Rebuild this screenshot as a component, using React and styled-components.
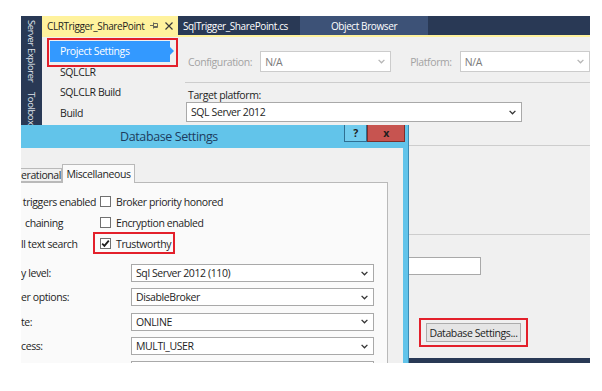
import React from "react";
import styled, { createGlobalStyle } from "styled-components";

const GlobalStyle = createGlobalStyle`
  body {
    margin: 0;
    background: #ffffff;
    font-family: "Open Sans", "Noto Sans", "Liberation Sans", sans-serif;
    font-size: 10.5px;
    letter-spacing: -0.4px;
    color: #1e1e1e;
  }
`;

const NAVY = "#293955";

// Página y ventana del IDE
const Page = styled.div`
  padding: 16px 0 0 21px;
  width: 602px;
  height: 391px;
  box-sizing: border-box;
`;

const IdeWindow = styled.div`
  position: relative;
  width: 569px;
  height: 347px;
  display: flex;
  overflow: hidden;
`;

const SideStrip = styled.div`
  width: 21px;
  background: ${NAVY};
  display: flex;
  flex-direction: column;
  align-items: center;
  gap: 10px;
  padding-top: 4px;
`;

const VerticalLabel = styled.span`
  writing-mode: vertical-rl;
  font-size: 9.5px;
  color: #dfe3ea;
  white-space: nowrap;
`;

const MainColumn = styled.div`
  flex: 1;
  display: flex;
  flex-direction: column;
`;

// Pestañas de documentos
const TabBar = styled.div`
  height: 19px;
  background: ${NAVY};
  display: flex;
`;

const DocTab = styled.div`
  width: ${(p) => p.$width}px;
  box-sizing: border-box;
  display: flex;
  align-items: center;
  justify-content: ${(p) => (p.$center ? "center" : "flex-start")};
  padding: 0 5px;
  font-size: 10px;
  white-space: nowrap;
  overflow: hidden;
  background: ${(p) => (p.$active ? "#fff29d" : p.$hover ? "#3d5277" : "transparent")};
  color: ${(p) => (p.$active ? "#1e1e1e" : "#ffffff")};
`;

const TabTitle = styled.span`
  flex: 1;
`;

const TabIcon = styled.span`
  display: flex;
  margin-left: ${(p) => p.$gap}px;
`;

const TabUnderline = styled.div`
  height: 2px;
  background: #fff29d;
`;

const Body = styled.div`
  flex: 1;
  display: flex;
  background: #f0f0f0;
`;

const BottomStrip = styled.div`
  height: 5px;
  background: ${NAVY};
`;

// Lista de la izquierda
const NavList = styled.div`
  width: 138px;
  padding-top: 4px;
  display: flex;
  flex-direction: column;
`;

const NavItem = styled.div`
  position: relative;
  height: 20.5px;
  line-height: 20.5px;
  padding-left: ${(p) => (p.$selected ? 10 : 18)}px;
  margin-left: ${(p) => (p.$selected ? 8 : 0)}px;
  width: ${(p) => (p.$selected ? "120px" : "auto")};
  box-sizing: border-box;
  background: ${(p) => (p.$selected ? "#3399ff" : "transparent")};
  color: ${(p) => (p.$selected ? "#ffffff" : "#1e1e1e")};

  ${(p) =>
    p.$selected &&
    `
    &::before {
      content: "";
      position: absolute;
      right: -4px;
      top: 6px;
      border-left: 4px solid #3399ff;
      border-top: 4px solid transparent;
      border-bottom: 4px solid transparent;
    }
    &::after {
      content: "";
      position: absolute;
      left: -3px;
      top: -3px;
      right: -8px;
      bottom: -5px;
      border: 2px solid #e3202b;
    }
  `}
`;

// Panel de configuración
const Pane = styled.div`
  flex: 1;
  display: flex;
  flex-direction: column;
  padding-top: 14px;
`;

const InlineRow = styled.div`
  display: flex;
  align-items: center;
  gap: 8px;
  padding-left: 8px;
`;

const FieldLabel = styled.span`
  color: ${(p) => (p.$muted ? "#a3a3a3" : "#1e1e1e")};
  margin-left: ${(p) => p.$offset || 0}px;
  white-space: nowrap;
`;

const Select = styled.div`
  width: ${(p) => p.$width}px;
  height: ${(p) => p.$height || 21}px;
  box-sizing: border-box;
  display: flex;
  align-items: center;
  justify-content: space-between;
  padding: 0 5px 0 4px;
  background: #ffffff;
  border: 1px solid ${(p) => (p.$disabled ? "#cccccc" : "#a9a9a9")};
  color: ${(p) => (p.$disabled ? "#7a7a7a" : "#1e1e1e")};
  margin-left: ${(p) => p.$offset || 0}px;
  white-space: nowrap;
`;

const Separator = styled.div`
  height: 1px;
  background: #cdcdcd;
  margin: ${(p) => p.$top}px 0 0 5px;
`;

const TargetLabel = styled.div`
  margin: 5px 0 0 8px;
  line-height: 14px;
`;

const TextBox = styled.div`
  width: 295px;
  height: 18px;
  margin: 22px 0 0 6px;
  box-sizing: border-box;
  background: #ffffff;
  border: 1px solid #a9a9a9;
`;

const ButtonWrap = styled.div`
  position: relative;
  align-self: flex-start;
  margin: 48px 0 0 246px;

  &::after {
    content: "";
    position: absolute;
    left: -7px;
    top: -5px;
    right: -7px;
    bottom: -5px;
    border: 2px solid #e3202b;
  }
`;

const Button = styled.div`
  width: 95px;
  height: 19px;
  box-sizing: border-box;
  display: flex;
  align-items: center;
  justify-content: center;
  background: #e5e5e5;
  border: 1px solid #acacac;
  white-space: nowrap;
`;

// Diálogo superpuesto
const DialogFrame = styled.div`
  position: absolute;
  left: 0;
  top: 109px;
  width: 388px;
  height: 260px;
  box-sizing: border-box;
  background: #62c4ea;
  border-right: 1px solid #3b8cb5;
  display: flex;
  flex-direction: column;
`;

const TitleBar = styled.div`
  height: 23px;
  display: flex;
  align-items: flex-start;
`;

const DialogTitle = styled.div`
  flex: 1;
  text-align: center;
  padding-right: 27px;
  line-height: 23px;
  font-size: 12.5px;
  color: #1d3c5e;
`;

const CaptionButton = styled.div`
  width: ${(p) => p.$width}px;
  height: 17px;
  box-sizing: border-box;
  display: flex;
  align-items: center;
  justify-content: center;
  background: ${(p) => (p.$close ? "#c75450" : "#72ccee")};
  border: 1px solid ${(p) => (p.$close ? "#7b2f2c" : "#2f6f92")};
  border-top: none;
  margin-right: ${(p) => (p.$close ? 3 : 0)}px;
  font-weight: bold;
  font-size: 10.5px;
  color: #1e1e1e;
`;

const DialogBody = styled.div`
  flex: 1;
  margin-right: 5px;
  background: #f0f0f0;
  padding: 16px 15px 0 0;
  display: flex;
  flex-direction: column;
`;

const TabStrip = styled.div`
  height: 18px;
  display: flex;
  align-items: flex-end;
`;

const DlgTab = styled.div`
  position: relative;
  z-index: 1;
  width: ${(p) => p.$width}px;
  height: ${(p) => (p.$active ? 19 : 14)}px;
  margin-bottom: ${(p) => (p.$active ? -1 : 0)}px;
  box-sizing: border-box;
  display: flex;
  align-items: center;
  justify-content: ${(p) => (p.$active ? "center" : "flex-start")};
  background: ${(p) => (p.$active ? "#fafafa" : "#f0f0f0")};
  border: 1px solid #b9b9b9;
  border-left: ${(p) => (p.$active ? "1px solid #b9b9b9" : "none")};
  border-bottom: ${(p) => (p.$active ? "none" : "1px solid #b9b9b9")};
  white-space: nowrap;
  overflow: hidden;
`;

const TabPanel = styled.div`
  flex: 1;
  background: #fafafa;
  border-top: 1px solid #b9b9b9;
  border-right: 1px solid #b9b9b9;
  padding-top: 8px;
`;

const CheckRow = styled.div`
  height: 21px;
  display: flex;
  align-items: center;
`;

const RowLabel = styled.span`
  width: ${(p) => p.$width}px;
  flex-shrink: 0;
  text-indent: ${(p) => p.$indent || 0}px;
  box-sizing: border-box;
  white-space: nowrap;
  overflow: hidden;
`;

const CheckItem = styled.div`
  position: relative;
  align-self: stretch;
  display: flex;
  align-items: center;
  gap: 5px;
  white-space: nowrap;

  ${(p) =>
    p.$highlight &&
    `
    &::after {
      content: "";
      position: absolute;
      left: -7px;
      right: -4px;
      top: -1px;
      bottom: 0;
      border: 2px solid #e3202b;
    }
  `}
`;

const Box = styled.span`
  width: 11px;
  height: 11px;
  box-sizing: border-box;
  border: 1px solid #707070;
  background: #ffffff;
  display: flex;
  align-items: center;
  justify-content: center;
`;

const SelectList = styled.div`
  margin-top: 7px;
`;

const SelectRow = styled.div`
  height: 24.3px;
  display: flex;
  align-items: center;
`;

const Chevron = ({ color = "#333" }) => (
  <svg width="7" height="5" viewBox="0 0 7 5">
    <path d="M0.6 0.9 L3.5 3.8 L6.4 0.9" fill="none" stroke={color} strokeWidth="1.3" />
  </svg>
);

const PinIcon = () => (
  <svg width="9" height="7" viewBox="0 0 9 7">
    <path d="M0 3.5H3M3.5 0.5V6.5M3.5 1.5H7.5V5.5H3.5M3.5 4.5H7.5" fill="none" stroke="#6a6a5a" strokeWidth="1" />
  </svg>
);

const CloseIcon = () => (
  <svg width="8" height="8" viewBox="0 0 8 8">
    <path d="M0.5 0.5L7.5 7.5M7.5 0.5L0.5 7.5" stroke="#3a3a3a" strokeWidth="1.2" />
  </svg>
);

const CheckMark = () => (
  <svg width="9" height="9" viewBox="0 0 9 9">
    <path d="M1.2 4.6 L3.4 6.8 L7.8 1.6" fill="none" stroke="#1e1e1e" strokeWidth="1.8" />
  </svg>
);

const checks = [
  { label: "e triggers enabled", text: "Broker priority honored", indent: -6 },
  { label: "chaining", text: "Encryption enabled", indent: 4 },
  { label: "ll text search", text: "Trustworthy", checked: true },
];

const selects = [
  { label: "y level:", value: "Sql Server 2012 (110)" },
  { label: "er options:", value: "DisableBroker" },
  { label: "te:", value: "ONLINE" },
  { label: "cess:", value: "MULTI_USER" },
  { label: "", value: "" },
];

const App = () => (
  <Page>
    <GlobalStyle />
    <IdeWindow>
      <SideStrip>
        <VerticalLabel>Server Explorer</VerticalLabel>
        <VerticalLabel>Toolbox</VerticalLabel>
      </SideStrip>

      <MainColumn>
        <TabBar>
          <DocTab $width={136} $active>
            <TabTitle>CLRTrigger_SharePoint</TabTitle>
            <TabIcon $gap={0}>
              <PinIcon />
            </TabIcon>
            <TabIcon $gap={6}>
              <CloseIcon />
            </TabIcon>
          </DocTab>
          <DocTab $width={122}>SqlTrigger_SharePoint.cs</DocTab>
          <DocTab $width={128} $hover $center>
            Object Browser
          </DocTab>
        </TabBar>
        <TabUnderline />

        <Body>
          <NavList>
            <NavItem $selected>Project Settings</NavItem>
            <NavItem>SQLCLR</NavItem>
            <NavItem>SQLCLR Build</NavItem>
            <NavItem>Build</NavItem>
          </NavList>

          <Pane>
            <InlineRow>
              <FieldLabel $muted>Configuration:</FieldLabel>
              <Select $width={131} $disabled>
                N/A
                <Chevron color="#b5b5b5" />
              </Select>
              <FieldLabel $muted $offset={11}>
                Platform:
              </FieldLabel>
              <Select $width={130} $disabled>
                N/A
                <Chevron color="#b5b5b5" />
              </Select>
            </InlineRow>
            <Separator $top={10} />
            <TargetLabel>Target platform:</TargetLabel>
            <Select $width={336} $height={20} $offset={6}>
              SQL Server 2012
              <Chevron />
            </Select>
            <Separator $top={23} />
            <Separator $top={88} />
            <TextBox />
            <ButtonWrap>
              <Button>Database Settings...</Button>
            </ButtonWrap>
          </Pane>
        </Body>
        <BottomStrip />
      </MainColumn>

      <DialogFrame>
        <TitleBar>
          <DialogTitle>Database Settings</DialogTitle>
          <CaptionButton $width={23}>?</CaptionButton>
          <CaptionButton $width={38} $close>
            x
          </CaptionButton>
        </TitleBar>
        <DialogBody>
          <TabStrip>
            <DlgTab $width={41}>erational</DlgTab>
            <DlgTab $width={73} $active>
              Miscellaneous
            </DlgTab>
          </TabStrip>
          <TabPanel>
            {checks.map((c) => (
              <CheckRow key={c.text}>
                <RowLabel $width={79} $indent={c.indent}>
                  {c.label}
                </RowLabel>
                <CheckItem $highlight={c.checked}>
                  <Box>{c.checked && <CheckMark />}</Box>
                  {c.text}
                </CheckItem>
              </CheckRow>
            ))}
            <SelectList>
              {selects.map((s, i) => (
                <SelectRow key={i}>
                  <RowLabel $width={110}>{s.label}</RowLabel>
                  <Select $width={243} $height={18}>
                    {s.value}
                    <Chevron />
                  </Select>
                </SelectRow>
              ))}
            </SelectList>
          </TabPanel>
        </DialogBody>
      </DialogFrame>
    </IdeWindow>
  </Page>
);

export default App;
